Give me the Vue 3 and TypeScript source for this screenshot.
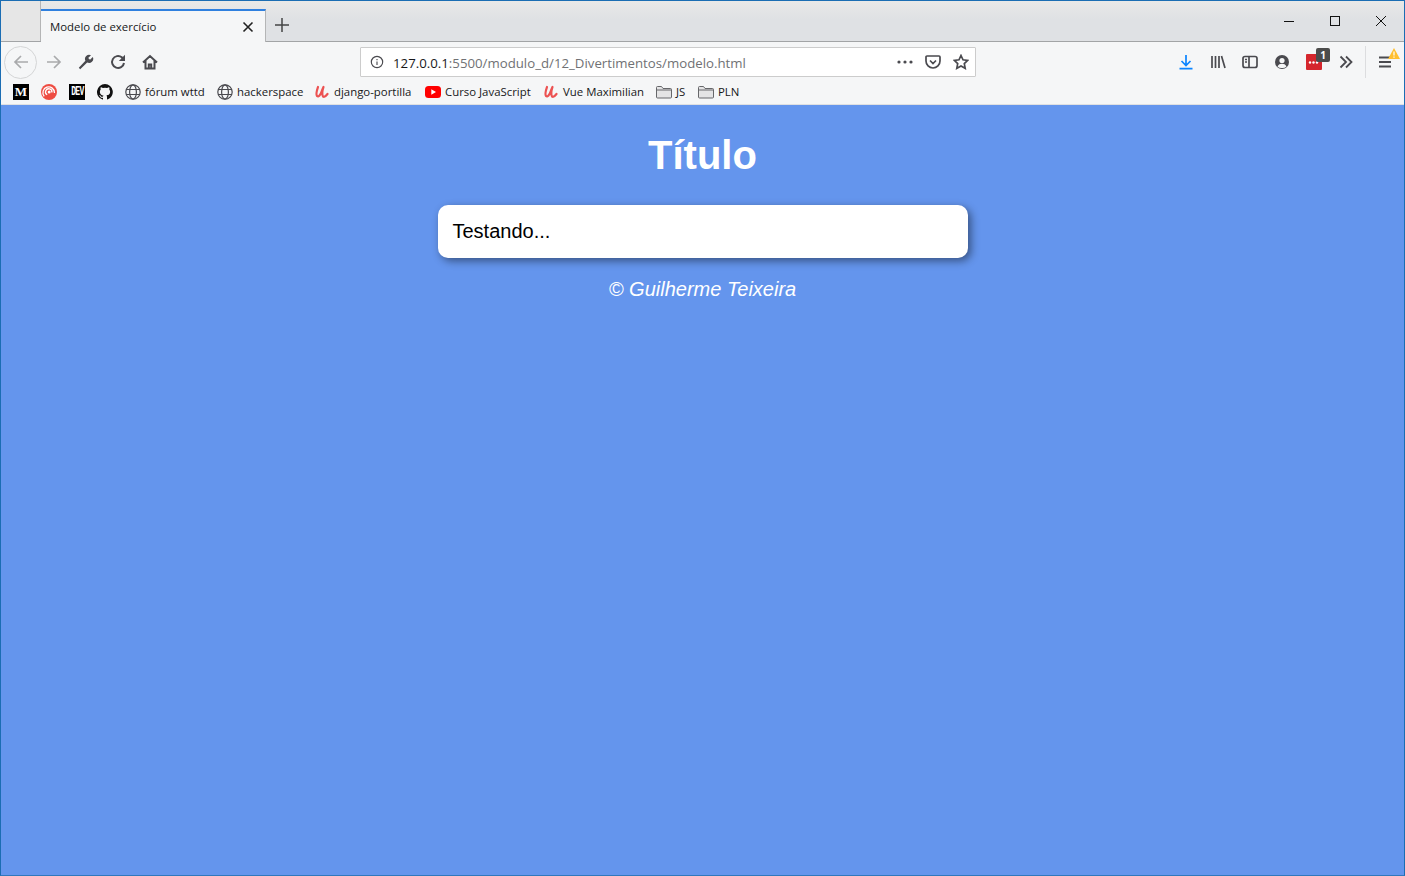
<template>
  <div class="window">
    <div class="tabbar">
      <div class="tab-old"></div>
      <div class="tab">
        <span class="tab-title">Modelo de exercício</span>
        <svg class="tab-close" viewBox="0 0 12 12"><path d="M1.500 1.500l9 9M10.500 1.500l-9 9" /></svg>
      </div>
      <svg class="new-tab" viewBox="0 0 16 16"><path d="M8 1v14M1 8h14" /></svg>
      <div class="win-controls">
        <svg viewBox="0 0 12 12"><path d="M1 6.500h10" /></svg>
        <svg viewBox="0 0 12 12"><rect x="1.500" y="1.500" width="9" height="9" /></svg>
        <svg viewBox="0 0 12 12"><path d="M1 1l10 10M11 1L1 11" /></svg>
      </div>
    </div>

    <div class="toolbar">
      <div class="back-btn">
        <svg class="icon light" viewBox="0 0 16 16"><path d="M15 8H2M8 2L2 8l6 6" /></svg>
      </div>
      <div class="nav-icons">
        <svg class="icon light" viewBox="0 0 16 16"><path d="M1 8h13M8 2l6 6-6 6" /></svg>
        <svg class="icon" viewBox="0 0 16 16"><path class="solid" d="M2.200 15.200L.8 13.800l6.600-7A4.200 4.200 0 0 1 13 1.200L10.200 4l1.800 1.800L14.800 3A4.200 4.200 0 0 1 9.200 8.600z" /></svg>
        <svg class="icon thick" viewBox="0 0 16 16"><path d="M14 9A6 6 0 1 1 11.800 3.300L13.500 5" /><path class="solid" d="M15 .8V7H8.800z" /></svg>
        <svg class="icon thick" viewBox="0 0 16 16"><path d="M1 8.500L8 2l7 6.500M3.500 6.800v7.700h9V6.800M6.800 14.500v-4h2.400v4" /></svg>
      </div>

      <div class="urlbar">
        <svg class="info" viewBox="0 0 16 16"><circle cx="8" cy="8" r="6.500" /><path d="M8 7.500v4M8 4.500v1.500" /></svg>
        <span class="url"><span class="host">127.0.0.1</span>:5500/modulo_d/12_Divertimentos/modelo.html</span>
        <div class="url-actions">
          <svg class="dots" viewBox="0 0 16 4"><circle cx="2" cy="2" r="1.600" /><circle cx="8" cy="2" r="1.600" /><circle cx="14" cy="2" r="1.600" /></svg>
          <svg class="icon" viewBox="0 0 16 16"><path d="M2 2h12a1 1 0 0 1 1 1v4a7 7 0 0 1-14 0V3a1 1 0 0 1 1-1zM5 6.500l3 3 3-3" /></svg>
          <svg class="icon" viewBox="0 0 16 16"><path d="M8 1.500l2 4.300 4.700.6-3.400 3.200.9 4.700L8 12l-4.200 2.300.9-4.700L1.300 6.400 6 5.800z" /></svg>
        </div>
      </div>

      <div class="tools">
        <svg class="icon blue" viewBox="0 0 16 16"><path d="M8 1v10M3.500 7L8 11.500 12.500 7M1.500 14.700h13" /></svg>
        <svg class="icon" viewBox="0 0 16 16"><path d="M2 2v12M5.500 2v12M9 2v12M11.500 2l3.500 12" /></svg>
        <svg class="icon" viewBox="0 0 16 16"><rect x="1" y="2.500" width="14" height="11" rx="2" /><path d="M7 2.500v11M3 5.500h2M3 8h2" /></svg>
        <svg class="icon" viewBox="0 0 16 16"><circle cx="8" cy="8" r="7" class="solid" /><circle cx="8" cy="6.500" r="2.600" class="hole" /><path class="hole" d="M3.500 12.500c1-2 2.600-2.700 4.500-2.700s3.500.7 4.500 2.700A6 6 0 0 1 8 14a6 6 0 0 1-4.500-1.500z" /></svg>
        <div class="ext">
          <svg class="ext-dots" viewBox="0 0 16 16"><circle cx="4" cy="8.500" r="1.200" /><circle cx="7.500" cy="8.500" r="1.200" /><circle cx="11" cy="8.500" r="1.200" /></svg>
          <span class="ext-badge">1</span>
        </div>
        <svg class="chevrons" viewBox="0 0 14 14"><path d="M1.500 1.500L7 7l-5.500 5.500M7 1.500L12.500 7 7 12.500" /></svg>
        <div class="sep"></div>
        <div class="menu">
          <svg class="icon" viewBox="0 0 16 16"><path d="M2 3.500h12M2 8h12M2 12.500h12" /></svg>
          <svg class="warn" viewBox="0 0 12 11"><path d="M6 0l6 11H0z" /><path class="mark" d="M6 3.500v4M6 8.500v1.200" /></svg>
        </div>
      </div>
    </div>

    <div class="bookmarks">
      <div class="bm"><span class="ic-medium">M</span></div>
      <div class="bm">
        <svg class="bm-icon pocketcasts" viewBox="0 0 16 16"><circle class="disc" cx="8" cy="8" r="8" /><path class="ring" d="M3.200 12.400A5.800 5.800 0 1 1 13.500 9" /><path class="ring" d="M6.200 10.800A3.200 3.200 0 1 1 10.900 8.500" /><circle class="core" cx="8.200" cy="8" r="1.500" /></svg>
      </div>
      <div class="bm"><span class="ic-dev"><span>DEV</span></span></div>
      <div class="bm">
        <svg class="bm-icon" viewBox="0 0 16 16"><path fill="#111" d="M8 0a8 8 0 0 0-2.500 15.600c.4.100.5-.2.500-.4v-1.400c-2.200.5-2.700-1-2.700-1-.4-.9-.9-1.200-.9-1.200-.7-.5.100-.5.100-.5.800.1 1.200.8 1.200.8.700 1.200 1.900.9 2.300.7.100-.5.300-.9.500-1.100-1.800-.2-3.600-.9-3.600-4 0-.9.300-1.600.8-2.100-.1-.2-.4-1 .1-2.100 0 0 .7-.2 2.200.8a7.600 7.600 0 0 1 4 0c1.500-1 2.200-.8 2.200-.8.400 1.100.2 1.900.1 2.100.5.600.8 1.300.8 2.100 0 3.100-1.900 3.700-3.700 3.900.3.300.6.800.6 1.500v2.200c0 .2.100.5.600.4A8 8 0 0 0 8 0z" /></svg>
      </div>
      <div v-for="item in links" :key="item.label" class="bm">
        <svg v-if="item.kind === 'globe'" class="bm-icon globe" viewBox="0 0 16 16"><circle cx="8" cy="8" r="7.200" /><ellipse cx="8" cy="8" rx="3.400" ry="7.200" /><path d="M1 5.500h14M1 10.500h14" /></svg>
        <svg v-else-if="item.kind === 'udemy'" class="bm-icon" viewBox="0 0 16 16"><path class="udemy" d="M4 3C3 6 1.500 10 3 12c1.500 1.500 3.500-1 5-5.500L9.500 3C8.500 6 7.500 10 9 12.500c1.500 1 3-.5 4.500-2.500" /></svg>
        <svg v-else-if="item.kind === 'youtube'" class="bm-icon" viewBox="0 0 16 16"><rect y="2" width="16" height="12" rx="3.500" fill="#f00" /><path d="M6.300 5.200v5.600L11 8z" fill="#fff" /></svg>
        <svg v-else class="bm-icon folder" viewBox="0 0 16 16"><path d="M.5 3.500a1 1 0 0 1 1-1h4l1.500 2h7.500a1 1 0 0 1 1 1v7.500a1 1 0 0 1-1 1h-13a1 1 0 0 1-1-1z" /><path d="M.5 6h15" /></svg>
        <span class="bm-label" :style="{ width: item.width + 'px' }">{{ item.label }}</span>
      </div>
    </div>

    <main class="page">
      <h1>Título</h1>
      <section class="card">Testando...</section>
      <footer>© Guilherme Teixeira</footer>
    </main>
  </div>
</template>

<script setup lang="ts">
interface Bookmark {
  label: string
  kind: 'globe' | 'udemy' | 'youtube' | 'folder'
  width: number
}

const links: Bookmark[] = [
  { label: 'fórum wttd', kind: 'globe', width: 60 },
  { label: 'hackerspace', kind: 'globe', width: 65 },
  { label: 'django-portilla', kind: 'udemy', width: 79 },
  { label: 'Curso JavaScript', kind: 'youtube', width: 86 },
  { label: 'Vue Maximilian', kind: 'udemy', width: 81 },
  { label: 'JS', kind: 'folder', width: 10 },
  { label: 'PLN', kind: 'folder', width: 22 },
]
</script>

<style>
html, body {
  margin: 0;
  padding: 0;
}
</style>

<style scoped>
.window {
  width: 1405px;
  height: 876px;
  box-sizing: border-box;
  display: flex;
  flex-direction: column;
  border: 1px solid #1b6db3;
  border-bottom-color: #2f78bd;
  font-family: "Open Sans", "Noto Sans", sans-serif;
  overflow: hidden;
  background: #f5f6f7;
}

svg {
  display: block;
  flex: none;
}

/* tab strip */
.tabbar {
  height: 41px;
  box-sizing: border-box;
  flex: none;
  display: flex;
  align-items: flex-end;
  background: linear-gradient(#e9e9e8, #dfe1e4 45%);
  border-bottom: 1px solid #a2a4a6;
}

.tab-old {
  width: 40px;
  height: 40px;
  border-right: 1px solid #b4b5b6;
  box-sizing: border-box;
  background: #e6e6e6;
}

.tab {
  width: 225px;
  height: 33px;
  margin-bottom: -1px;
  box-sizing: border-box;
  display: flex;
  align-items: center;
  justify-content: space-between;
  padding: 0 11px 0 9px;
  background: #f5f6f7;
  border-top: 2px solid #2f80df;
  border-right: 1px solid #b4b5b6;
}

.tab-title {
  font-size: 11.400px;
  color: #16181a;
}

.tab-close {
  width: 12px;
  height: 12px;
  fill: none;
  stroke: #222;
  stroke-width: 1.600;
}

.new-tab {
  width: 16px;
  height: 16px;
  margin: 0 0 8px 8px;
  fill: none;
  stroke: #444;
  stroke-width: 1.500;
}

.win-controls {
  margin-left: auto;
  align-self: stretch;
  display: flex;
  gap: 34px;
  padding: 14px 17px 0 0;
}

.win-controls svg {
  width: 12px;
  height: 12px;
  fill: none;
  stroke: #111;
  stroke-width: 1;
}

/* nav bar */
.toolbar {
  height: 40px;
  flex: none;
  display: flex;
  align-items: center;
  background: #f5f6f7;
  padding-left: 3px;
}

.icon {
  width: 16px;
  height: 16px;
  fill: none;
  stroke: #4a4a4f;
  stroke-width: 1.700;
}

.icon.thick {
  stroke-width: 2;
}

.icon .solid {
  fill: #4a4a4f;
  stroke: none;
}

.icon .hole {
  fill: #f5f6f7;
  stroke: none;
}

.icon.light {
  stroke: #a9aaac;
}

.icon.blue {
  stroke: #0a84ff;
}

.back-btn {
  width: 33px;
  height: 33px;
  box-sizing: border-box;
  border: 1px solid #d4d5d6;
  border-radius: 50%;
  display: flex;
  align-items: center;
  justify-content: center;
  flex: none;
}

.nav-icons {
  display: flex;
  gap: 16px;
  margin-left: 9px;
}

.urlbar {
  width: 616px;
  height: 30px;
  box-sizing: border-box;
  margin-left: 202px;
  display: flex;
  align-items: center;
  background: #fff;
  border: 1px solid #ccc;
  border-radius: 1px;
  padding: 0 6px 0 9px;
}

.info {
  width: 14px;
  height: 14px;
  fill: none;
  stroke: #4a4a4f;
  stroke-width: 1.300;
}

.url {
  margin-left: 9px;
  padding-top: 1px;
  font-size: 13.240px;
  color: #707174;
  white-space: nowrap;
}

.host {
  color: #17181a;
}

.url-actions {
  margin-left: auto;
  display: flex;
  align-items: center;
  gap: 12px;
}

.dots {
  width: 16px;
  height: 4px;
  fill: #4a4a4f;
}

.tools {
  margin-left: 202px;
  display: flex;
  align-items: center;
  gap: 16px;
}

.ext {
  position: relative;
  width: 16px;
  height: 16px;
  background: #d5262d;
  border-radius: 1px;
  text-align: center;
}

.ext-dots {
  width: 16px;
  height: 16px;
  fill: #fff;
}

.ext-badge {
  position: absolute;
  top: -6px;
  left: 10px;
  width: 14px;
  height: 14px;
  border-radius: 2px;
  background: #4c4c4c;
  color: #fff;
  font-size: 10px;
  font-weight: 700;
  line-height: 14px;
}

.chevrons {
  width: 14px;
  height: 14px;
  margin-left: 1px;
  fill: none;
  stroke: #4a4a4f;
  stroke-width: 1.800;
}

.sep {
  width: 1px;
  height: 32px;
  background: #dcdddf;
  margin-left: -4px;
}

.menu {
  position: relative;
  margin-left: -5px;
}

.menu .icon {
  stroke-width: 2;
}

.warn {
  position: absolute;
  top: -6px;
  left: 11px;
  width: 12px;
  height: 11px;
  fill: #ffbf2f;
}

.warn .mark {
  stroke: #fff;
  stroke-width: 1.200;
}

/* bookmarks */
.bookmarks {
  height: 23px;
  flex: none;
  display: flex;
  align-items: center;
  gap: 12px;
  padding: 0 0 2px 12px;
  box-sizing: border-box;
  background: #f5f6f7;
  border-bottom: 1px solid #dfe0e2;
}

.bm {
  display: flex;
  align-items: center;
  gap: 4px;
}

.bm-icon {
  width: 16px;
  height: 16px;
}

.bm-label {
  padding-bottom: 1px;
  font-size: 11.400px;
  color: #17181a;
  white-space: nowrap;
}

.ic-medium {
  width: 16px;
  height: 16px;
  background: #000;
  color: #fff;
  font: 700 13px/16px "Liberation Serif", serif;
  text-align: center;
}

.ic-dev {
  display: flex;
  align-items: center;
  justify-content: center;
  width: 16px;
  height: 16px;
  background: #000;
  color: #fff;
  font: 700 7px/16px "Liberation Mono", monospace;
  letter-spacing: -0.600px;
}

.ic-dev span {
  display: block;
  transform: scale(1.150, 1.700);
}

.pocketcasts .disc {
  fill: #ee4c42;
}

.pocketcasts .ring {
  fill: none;
  stroke: #fff;
  stroke-width: 1.300;
}

.pocketcasts .core {
  fill: #fff;
}

.globe {
  fill: none;
  stroke: #4a4a4f;
  stroke-width: 1.200;
}

.folder {
  fill: #e4e4e5;
  stroke: #66676a;
  stroke-width: 1;
}

.udemy {
  fill: none;
  stroke: #ec5252;
  stroke-width: 2.200;
  stroke-linecap: round;
  stroke-linejoin: round;
}

/* page content */
.page {
  flex: 1;
  display: flex;
  flex-direction: column;
  align-items: center;
  background: #6495ed;
  font-family: "Liberation Sans", Arial, sans-serif;
  color: #fff;
}

h1 {
  margin: 27px 0 0;
  font-size: 40px;
  line-height: 46px;
  font-weight: 700;
}

.card {
  width: 530px;
  height: 53px;
  box-sizing: border-box;
  margin-top: 27px;
  padding: 0 15px;
  display: flex;
  align-items: center;
  background: #fff;
  border-radius: 10px;
  box-shadow: 3px 3px 8px rgba(0, 0, 0, 0.45);
  color: #000;
  font-size: 20px;
}

footer {
  margin-top: 20px;
  font-size: 20px;
  line-height: 23px;
  font-style: italic;
}
</style>
